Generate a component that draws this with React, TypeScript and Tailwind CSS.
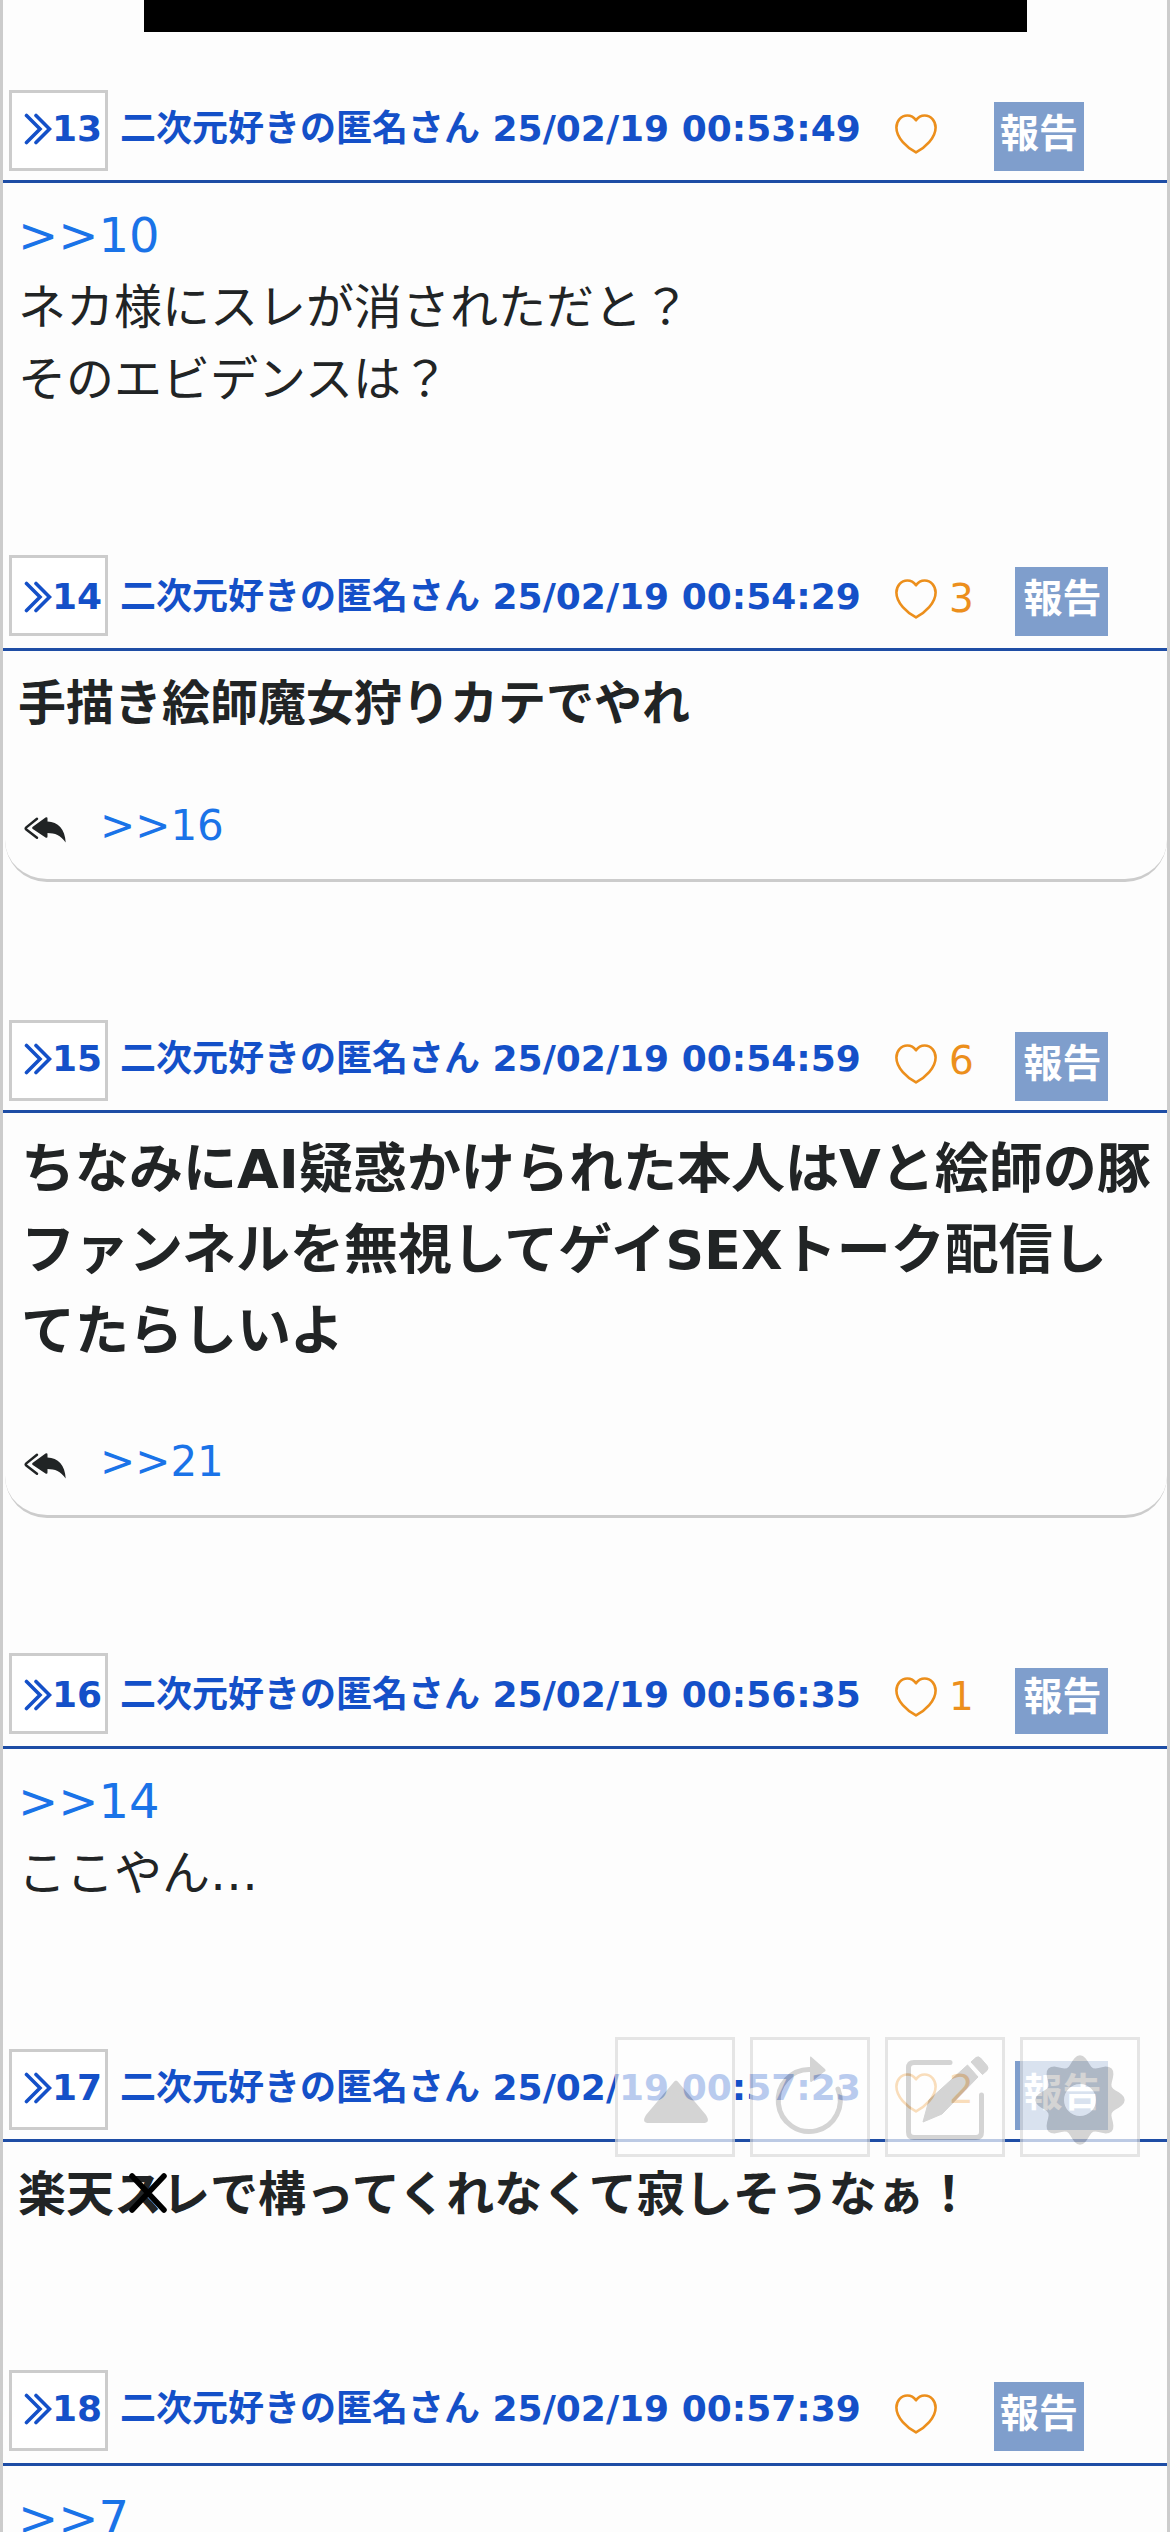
import type { ReactNode } from 'react';
import { clsx } from 'clsx';

type Post = {
  id: number;
  time: string;
  likes?: number;
  size?: 'normal' | 'bold' | 'large';
  lines: ReactNode[];
  reply?: number;
  // spacing differs by a few pixels between posts
  title: string;
  head: string;
  button?: string;
  replyGap?: string;
  after: string;
};

const anchor = (n: number) => <a className="text-[#1a73e8]">&gt;&gt;{n}</a>;

const posts: Post[] = [
  {
    id: 13,
    time: '25/02/19 00:53:49',
    lines: [anchor(10), 'ネカ様にスレが消されただと？', 'そのエビデンスは？'],
    title: 'mt-3',
    head: 'pb-[9px]',
    after: 'mb-[140px]',
  },
  {
    id: 14,
    time: '25/02/19 00:54:29',
    likes: 3,
    size: 'bold',
    lines: ['手描き絵師魔女狩りカテでやれ'],
    reply: 16,
    title: 'mt-[15px]',
    head: 'pb-3',
    replyGap: 'mt-[55px]',
    after: 'mb-[138px]',
  },
  {
    id: 15,
    time: '25/02/19 00:54:59',
    likes: 6,
    size: 'large',
    lines: ['ちなみにAI疑惑かけられた本人はVと絵師の豚', 'ファンネルを無視してゲイSEXトーク配信し', 'てたらしいよ'],
    reply: 21,
    title: 'mt-3',
    head: 'pb-[9px]',
    replyGap: 'mt-[58px]',
    after: 'mb-[135px]',
  },
  {
    id: 16,
    time: '25/02/19 00:56:35',
    likes: 1,
    lines: [anchor(14), 'ここやん…'],
    title: 'mt-[15px]',
    head: 'pb-3',
    button: 'mt-[15px] h-[66px] leading-[58px]',
    after: 'mb-[140px]',
  },
  {
    id: 17,
    time: '25/02/19 00:57:23',
    likes: 2,
    size: 'bold',
    lines: [
      <>
        楽天
        <span className="relative">
          ス
          <StrikeMark />
        </span>
        レで構ってくれなくて寂しそうなぁ！
      </>,
    ],
    title: 'mt-3',
    head: 'pb-[9px]',
    after: 'mb-[140px]',
  },
  {
    id: 18,
    time: '25/02/19 00:57:39',
    lines: [anchor(7)],
    title: 'mt-3',
    head: 'pb-3',
    after: 'mb-0',
  },
];

function StrikeMark() {
  return (
    <svg className="absolute left-[14px] top-[6px] h-[42px] w-[40px]" viewBox="0 0 40 42" fill="none" stroke="#000" strokeWidth="5.5" strokeLinecap="round">
      <path d="M4 4 36 38M36 4 4 38" />
    </svg>
  );
}

function Chevrons() {
  return (
    <svg className="h-[32px] w-[28px]" viewBox="0 0 28 32" fill="none" stroke="currentColor" strokeWidth="3.6" strokeLinecap="round" strokeLinejoin="miter">
      <path d="M2.5 2.5 16 16 2.5 29.5M12 2.5 25.5 16 12 29.5" />
    </svg>
  );
}

function Heart() {
  return (
    <svg className="h-[40px] w-[42px]" viewBox="0 0 42 40" fill="none" stroke="currentColor" strokeWidth="2.6" strokeLinejoin="round">
      <path d="M21 6.3C18.6 2.8 15.6 1.5 12.3 1.5 6 1.5 1.4 7 1.4 13.4 1.4 24 12 33.5 21 38.4 30 33.5 40.6 24 40.6 13.4 40.6 7 36 1.5 29.7 1.5 26.4 1.5 23.4 2.8 21 6.3Z" />
    </svg>
  );
}

function ReplyAll() {
  return (
    <svg className="h-[26px] w-[42px]" viewBox="0 0 42 26">
      <path d="M13 1.8 2.3 10.4Q1 11.5 2.3 12.6L13 20.7" fill="none" stroke="#212425" strokeWidth="2.5" strokeLinecap="round" />
      <path d="M8.8 9.8 21.5.6Q23.5-.4 23.5 1.6V4.6C34 5 41 12 41.7 25.5 36.5 18 31 16.2 23.5 16V19.4Q23.5 21.4 21.5 20.4L8.8 12Q7.5 10.9 8.8 9.8Z" fill="#212425" />
    </svg>
  );
}

function PostItem({ post }: { post: Post }) {
  const size = post.size ?? 'normal';
  return (
    <article className={post.after}>
      <header className={clsx('flex items-start border-b-[3px] border-[#1e4da5] pl-[6px] text-[#1450c8]', post.head)}>
        <div className="flex h-[81px] w-[99px] shrink-0 items-start border-[3px] border-[#ccc] bg-white pl-3 text-[36px] font-bold leading-[54px]">
          <div className={clsx('flex shrink-0 -translate-y-[3px] items-center', post.title)}>
            <Chevrons />
            <span>{post.id}</span>
          </div>
        </div>
        <h2 className={clsx('ml-3 w-[775px] shrink-0 whitespace-nowrap text-[36px] font-bold leading-[54px]', post.title)}>
          二次元好きの匿名さん {post.time}
        </h2>
        <div className="mt-[24px] text-[#ec8f1c]">
          <Heart />
        </div>
        {post.likes !== undefined && (
          <span className={clsx('ml-3 w-[25px] text-[39px] leading-[58px] text-[#ec8f1c]', post.title)}>{post.likes}</span>
        )}
        <button
          className={clsx(
            'flex items-start justify-center bg-[#7f9ecc] text-[39px] font-bold text-white',
            post.button ?? 'mt-3 h-[69px] leading-[64px]',
            post.likes === undefined ? 'ml-[57px] w-[90px]' : 'ml-[41px] w-[93px] pl-[2px]',
          )}
        >
          報告
        </button>
      </header>
      <div className={clsx(post.reply && 'ml-[2px] rounded-b-[42px] border-b-[3px] border-[#ccc] pb-[22px]')}>
        <div
          className={clsx(
            'whitespace-nowrap pt-4',
            size === 'normal' && 'pl-[15px] text-[48px] leading-[72px]',
            size === 'bold' && 'text-[48px] font-bold leading-[72px]',
            size === 'bold' && (post.reply ? 'pl-[13px]' : 'pl-[15px]'),
            size === 'large' && 'pl-4 text-[54px] font-bold leading-[81px]',
          )}
        >
          {post.lines.map((line, i) => (
            <p key={i}>{line}</p>
          ))}
        </div>
        {post.reply && (
          <div className={clsx('flex items-center gap-[34px] pl-[19px] text-[42px] leading-[63px]', post.replyGap)}>
            <div className="pt-[9px]">
              <ReplyAll />
            </div>
            {anchor(post.reply)}
          </div>
        )}
      </div>
    </article>
  );
}

// eight-lobed outline, sampled from a wave round the centre
const gearPath =
  Array.from({ length: 96 }, (_, i) => {
    const a = (i / 96) * Math.PI * 2;
    const r = 39.5 + 5.2 * Math.cos(8 * a);
    return `${i ? 'L' : 'M'}${(57 + r * Math.cos(a)).toFixed(2)} ${(60 + r * Math.sin(a)).toFixed(2)}`;
  }).join('') + 'ZM73 60a16 16 0 1 0-32 0a16 16 0 1 0 32 0Z';

const tools = [
  {
    name: 'top',
    icon: <path d="M55 43Q58 38 61 43L88 75Q93 83 85 83H31Q23 83 28 75Z" fill="#c3c3c3" />,
  },
  {
    name: 'reload',
    icon: (
      <>
        <path d="M85 49A31 31 0 1 1 57 29.5" fill="none" stroke="#c3c3c3" strokeWidth="5" strokeLinecap="round" />
        <path d="M57 18Q57 15.5 59 17.5L72 29Q73.5 31 71 32L59 41.5Q57 43 57 40Z" fill="#c3c3c3" />
      </>
    ),
  },
  {
    name: 'write',
    icon: (
      <>
        <path d="M62 22.5H26Q20.5 22.5 20.5 28V92Q20.5 97.5 26 97.5H88Q93.5 97.5 93.5 92V55" fill="none" stroke="#c3c3c3" strokeWidth="5" strokeLinecap="round" />
        <path d="M35 82 41 60 79.5 25 90 37 54 74ZM83 22 88 17.5Q90.5 16 92.5 18L99 25.5Q101 28 99 30.5L94.5 34.5Z" fill="#c3c3c3" stroke="#c3c3c3" strokeLinejoin="round" />
      </>
    ),
  },
  {
    name: 'settings',
    icon: <path d={gearPath} fill="#c3c3c3" fillRule="evenodd" />,
  },
];

export default function App() {
  return (
    <main className="relative h-[2532px] w-[1170px] overflow-hidden border-x-[3px] border-[#ccc] bg-[#fdfdfd] font-['DejaVu_Sans','Noto_Sans_CJK_JP',sans-serif] text-[#212425]">
      <div className="mb-[58px] ml-[141px] h-[32px] w-[883px] bg-black" />
      {posts.map((post) => (
        <PostItem key={post.id} post={post} />
      ))}
      <nav className="absolute left-[612px] top-[2037px] flex gap-[15px] opacity-70">
        {tools.map((tool) => (
          <button key={tool.name} className="size-[120px] border-[3px] border-[#dcdcdc] bg-white">
            <svg className="size-[114px]" viewBox="0 0 114 114">
              {tool.icon}
            </svg>
          </button>
        ))}
      </nav>
    </main>
  );
}
